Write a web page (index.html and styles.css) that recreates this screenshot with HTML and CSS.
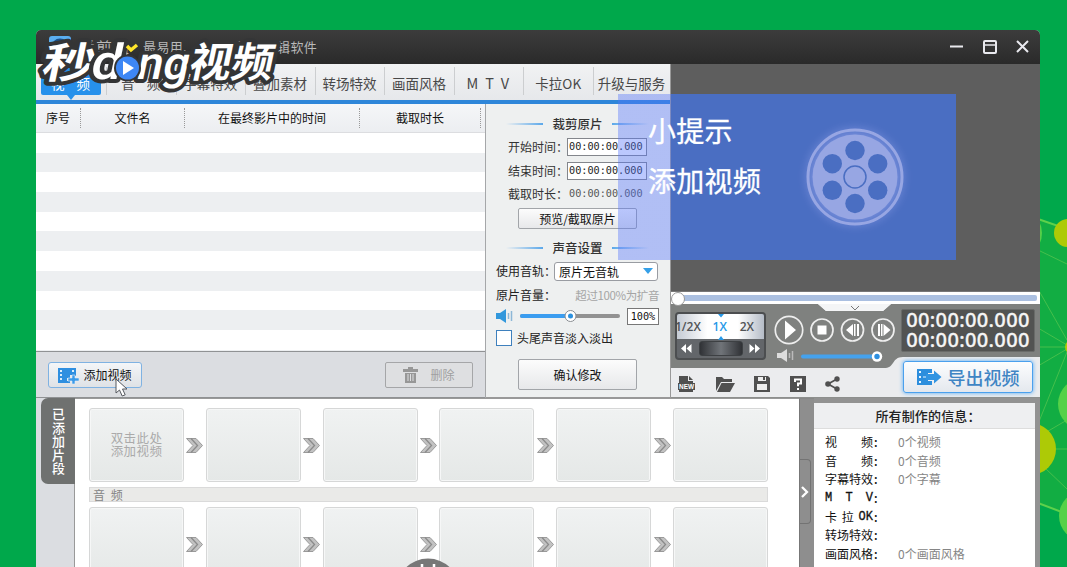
FILE: index.html
```html
<!DOCTYPE html>
<html lang="zh-CN">
<head>
<meta charset="utf-8">
<title>爱剪辑</title>
<link rel="stylesheet" href="styles.css">
</head>
<body>
<svg class="backdrop" width="1067" height="567" viewBox="0 0 1067 567">
  <path d="M1030 216L1067 229V514L1030 499Z" fill="#12ad43"/>
  <g stroke="#46bf4c" stroke-width="1" fill="none">
    <path d="M1038 219L1067 229" stroke="#5ed14b" stroke-width="2"/>
    <path d="M1038 250L1067 264M1038 289L1067 340M1038 328L1067 345M1038 347H1067M1038 366L1067 349M1038 424L1067 352M1038 437L1067 420M1038 449H1067M1045 468L1067 489"/>
    <path d="M1038 503L1067 514" stroke="#5ed14b" stroke-width="2"/>
  </g>
  <ellipse cx="1034" cy="233" rx="8" ry="15" fill="#55cf49"/>
  <circle cx="1068" cy="233" r="14" fill="#adca06"/>
  <circle cx="1072" cy="347" r="7" fill="#adca06"/>
  <circle cx="1084" cy="404" r="26" fill="#55d148"/>
  <circle cx="1030" cy="449" r="26" fill="#adca06"/>
  <circle cx="1084" cy="516" r="25" fill="#55d148"/>
</svg>

<main class="window">
  <header class="titlebar">
    <svg class="app-icon" width="22" height="22" viewBox="0 0 22 22"><rect width="22" height="22" rx="3" fill="#5aaef0"/><circle cx="11" cy="11" r="7" fill="none" stroke="#1c4e86" stroke-width="3"/></svg>
    <span class="app-name">爱剪辑</span>
    <span class="slogan">最易用、强大的视频剪辑软件</span>
    <svg class="window-buttons" width="82" height="16" viewBox="0 0 82 16" fill="none" stroke="#e9e9ee" stroke-width="2">
      <path d="M1 7.500h13M68 2l11 11M79 2l-11 11"/><rect x="35" y="2" width="12" height="12" rx="1"/><path d="M35 6h12" stroke-width="1.500"/>
    </svg>
  </header>

  <div class="upper">
    <section class="editor">
      <nav class="tabs">
        <span class="tab active">视<i></i>频</span>
        <span class="tab">音<i></i>频</span>
        <span class="tab">字幕特效</span>
        <span class="tab">叠加素材</span>
        <span class="tab">转场特效</span>
        <span class="tab">画面风格</span>
        <span class="tab mtv">M T V</span>
        <span class="tab">卡拉OK</span>
        <span class="tab last">升级与服务</span>
      </nav>
      <div class="work">
        <div class="list">
          <div class="list-head">
            <span class="col c1">序号</span><span class="col c2">文件名</span><span class="col c3">在最终影片中的时间</span><span class="col c4">截取时长</span>
          </div>
          <div class="list-rows"></div>
          <div class="list-actions">
            <button class="add-btn">
              <svg width="21" height="17" viewBox="0 0 21 17"><path d="M0 1h18v8h-3v-1h-3v3H9v3h3v2H0z" fill="#2f8fe0"/><path d="M2 3h2v2H2zM2 7h2v2H2zM2 11h2v2H2zM14 3h2v2h-2z" fill="#dceefb"/><path d="M14 8h3v3h4v3h-4v3h-3v-3h-4v-3h4z" fill="#3c9be8" stroke="#e4effa" stroke-width=".6"/></svg>
              添加视频
            </button>
            <button class="del-btn">
              <svg width="15" height="16" viewBox="0 0 15 16" fill="#979797"><path d="M5 0h5v2h5v3H0V2h5zM2 6h11v10H2z"/><path d="M5 7v7M7.500 7v7M10 7v7" stroke="#dedfe1" stroke-width="1"/></svg>
              <span>删除</span>
            </button>
          </div>
        </div>

        <aside class="settings">
          <h2 class="sec-title">裁剪原片</h2>
          <div class="time-row"><span>开始时间：</span><span class="time-box">00:00:00.000</span></div>
          <div class="time-row"><span>结束时间：</span><span class="time-box">00:00:00.000</span></div>
          <div class="time-row"><span>截取时长：</span><span class="time-box plain">00:00:00.000</span></div>
          <button class="panel-btn">预览/截取原片</button>
          <h2 class="sec-title second">声音设置</h2>
          <div class="track-row"><span>使用音轨：</span><span class="select">原片无音轨<svg width="10" height="6" viewBox="0 0 10 6"><path d="M0 0h10L5 6z" fill="#35a0e8"/></svg></span></div>
          <div class="volume-label"><span>原片音量：</span><span class="hint">超过100%为扩音</span></div>
          <div class="volume-row">
            <svg width="18" height="14" viewBox="0 0 18 14"><path d="M0 4h4l6-4v14l-6-4H0z" fill="#3298dc"/><path d="M12.500 4v6M15.500 2v10" stroke="#8db7d7" stroke-width="1.500"/></svg>
            <svg class="slider" width="100" height="14" viewBox="0 0 100 14"><rect y="5" width="100" height="4" rx="2" fill="#929292"/><rect y="5" width="50" height="4" rx="2" fill="#3b9df0"/><circle cx="50.500" cy="7" r="5.500" fill="#fff" stroke="#898d92"/><circle cx="50.500" cy="7" r="2.500" fill="#2c91df"/></svg>
            <span class="percent">100%</span>
          </div>
          <div class="fade-row"><i class="check"></i><span>头尾声音淡入淡出</span></div>
          <button class="panel-btn confirm">确认修改</button>
        </aside>
      </div>
    </section>

    <section class="player">
      <div class="screen"></div>
      <div class="seek"><i></i></div>
      <div class="controls">
        <svg class="control-shape" width="369" height="94" viewBox="0 0 369 94">
          <path d="M0 0H147l8 7h57l8-7H369V53H232c-6 0-8 3-10 6s-4 5-9 5H0z" fill="#7f817f"/>
          <path d="M147 0l8 7h57l8-7z" fill="#f4f5f6"/><path d="M180 2l4 4 4-4" fill="none" stroke="#777"/>
        </svg>
        <div class="controls-left">
          <div class="transport">
            <div class="speed">
              <div class="speed-values"><span class="half">1/2X</span><span class="one">1X</span><span>2X</span>
                <svg class="speed-marks" width="8" height="26" viewBox="0 0 8 26" fill="#2699e8"><path d="M1 0h6L4 3.500zM1 26h6L4 22z"/></svg></div>
              <div class="speed-wheel">
                <svg width="11" height="9" viewBox="0 0 11 9" fill="#fff"><path d="M5 0v9L0 4.500zM10.500 0v9l-5-4.500z"/></svg>
                <i></i>
                <svg width="11" height="9" viewBox="0 0 11 9" fill="#fff"><path d="M.5 0v9l5-4.500zM6 0v9l5-4.500z"/></svg>
              </div>
            </div>
            <svg class="buttons" width="124" height="60" viewBox="0 0 124 60">
              <g fill="none" stroke="#eee" stroke-width="1.700"><circle cx="18" cy="19" r="13.700"/><circle cx="51" cy="19" r="11"/><circle cx="81.500" cy="19" r="11"/><circle cx="112" cy="19" r="11"/></g>
              <g fill="#fff"><path d="M14 9.500v19L25 19zM46.500 14.500h9v9h-9zM75 19l7-6v12zM83 13h1.500v12H83zM86 13h2v12h-2zM107 13h2v12h-2zM110 13h1.500v12H110zM112.500 13l7 6-7 6z"/>
              <path d="M6 42h4l6-4v13l-6-4H6z" fill="#ddd"/></g>
              <path d="M18.500 42v5M21.500 40v9" stroke="#bbb" stroke-width="1.500"/>
              <path d="M32 45.500h74" stroke="#45a2ed" stroke-width="4" stroke-linecap="round"/><circle cx="106" cy="45.500" r="5.200" fill="#fff"/><circle cx="106" cy="45.500" r="2.700" fill="#2d8fe0"/>
            </svg>
          </div>
          <div class="tools">
            <svg width="17" height="16" viewBox="0 0 17 16"><path d="M1 0h9v5h5v11H1z" fill="#505050"/><path d="M11 0l4 4h-4z" fill="#505050"/><rect y="7" width="17" height="7" fill="#505050"/><text class="new-label" x="1" y="13.300" textLength="15" lengthAdjust="spacingAndGlyphs">NEW</text></svg>
            <svg width="20" height="16" viewBox="0 0 20 16"><path d="M1 15V1h6l2 2h8v3H6z" fill="#505050"/><path d="M6.500 7H20l-5 9H2z" fill="#505050"/></svg>
            <svg width="16" height="16" viewBox="0 0 16 16"><path d="M0 0h14l2 2v14H0z" fill="#505050"/><path d="M4 1h8v4H4zM3 8h10v6H3z" fill="#eee"/><path d="M9 1h2v3H9z" fill="#505050"/></svg>
            <svg width="16" height="16" viewBox="0 0 16 16"><path d="M0 0h16v16H0z" fill="#505050"/><path d="M5 6V3.500h6v4H8v2.800M8 12v2" fill="none" stroke="#fff" stroke-width="2"/></svg>
            <svg width="15" height="16" viewBox="0 0 15 16"><path d="M12 3L3 8l9 5" fill="none" stroke="#505050" stroke-width="1.700"/><g fill="#505050"><circle cx="12" cy="3" r="2.700"/><circle cx="3" cy="8" r="2.800"/><circle cx="12" cy="13" r="2.700"/></g></svg>
          </div>
        </div>
        <div class="controls-right">
          <div class="clock"><span>00:00:00.000</span><span>00:00:00.000</span></div>
          <button class="export">
            <svg width="25" height="16" viewBox="0 0 25 16"><path d="M0 0h15v4h-4v8h4v4H0z" fill="#2c8edd"/><path d="M2 2h2v2H2zM2 7h2v2H2zM2 12h2v2H2zM6 7.500h7v1H6z" fill="#e6f4ff"/><path d="M9 5h8V1.500l7.500 6.500-7.500 6.500V11H9z" fill="#3194e2"/></svg>
            导出视频
          </button>
        </div>
      </div>
    </section>
  </div>

  <svg class="symbols" width="0" height="0"><symbol id="next" viewBox="0 0 17 15">
    <path d="M.5.500H10L16.500 7.500 10 14.500H.5L7 7.500z" fill="#c2c2c2" stroke="#9a9a9a"/><path d="M5 .500l6.500 7-6.500 7" fill="none" stroke="#8b8b8b" stroke-width="1.300"/>
  </symbol></svg>

  <div class="lower">
    <div class="rail"><span>已添加片段</span></div>
    <section class="clips">
      <div class="slots">
        <div class="slot"><p><span>双击此处</span><span>添加视频</span></p></div><svg class="next"><use href="#next"/></svg><div class="slot"></div><svg class="next"><use href="#next"/></svg><div class="slot"></div><svg class="next"><use href="#next"/></svg><div class="slot"></div><svg class="next"><use href="#next"/></svg><div class="slot"></div><svg class="next"><use href="#next"/></svg><div class="slot"></div>
      </div>
      <div class="audio-bar">音 频</div>
      <div class="slots">
        <div class="slot"></div><svg class="next"><use href="#next"/></svg><div class="slot"></div><svg class="next"><use href="#next"/></svg><div class="slot"></div><svg class="next"><use href="#next"/></svg><div class="slot"></div><svg class="next"><use href="#next"/></svg><div class="slot"></div><svg class="next"><use href="#next"/></svg><div class="slot"></div>
      </div>
    </section>
    <div class="divider"><span><svg width="8" height="12" viewBox="0 0 8 12"><path d="M1 1l5 5-5 5" fill="none" stroke="#fff" stroke-width="2.300"/></svg></span></div>
    <section class="info">
      <h2>所有制作的信息：</h2>
      <dl>
        <dt><b>视</b><b>频</b></dt><dd>0个视频</dd>
        <dt><b>音</b><b>频</b></dt><dd>0个音频</dd>
        <dt><b>字幕特效</b></dt><dd>0个字幕</dd>
        <dt class="mono"><b>M</b><b>T</b><b>V</b></dt><dd></dd>
        <dt><b>卡</b><b>拉</b><b class="ok">OK</b></dt><dd></dd>
        <dt><b>转场特效</b></dt><dd></dd>
        <dt><b>画面风格</b></dt><dd>0个画面风格</dd>
        <dt><b>叠加素材</b></dt><dd>0个素材</dd>
      </dl>
    </section>
  </div>
</main>

<section class="tip">
  <div class="tip-text"><span>小提示</span><span>添加视频</span></div>
  <svg class="reel" width="110" height="110" viewBox="-55 -55 110 110">
    <circle r="47" fill="none" stroke="#97a6e3" stroke-width="3"/><circle r="42.500" fill="#97a6e3"/>
    <g fill="#4a6ec2"><circle cy="-26.500" r="9.700"/><circle cy="26.500" r="9.700"/><circle cx="-22.700" cy="-13.300" r="9.700"/><circle cx="22.700" cy="-13.300" r="9.700"/><circle cx="-22.700" cy="13.300" r="9.700"/><circle cx="22.700" cy="13.300" r="9.700"/></g>
    <circle r="11" fill="none" stroke="#4a6ec2" stroke-width="1.500"/>
  </svg>
</section>

<svg class="brand" width="250" height="70" viewBox="34 34 250 70">
  <g class="brand-text" transform="translate(15.700) skewX(-12)">
    <text x="41" y="78" textLength="53" lengthAdjust="spacingAndGlyphs" font-size="42">秒</text>
    <text x="90" y="79.500" font-size="49" class="latin" textLength="31" lengthAdjust="spacingAndGlyphs">d</text>
    <text x="136" y="79" font-size="46" class="latin" textLength="52" lengthAdjust="spacingAndGlyphs">ng</text>
    <text x="188" y="77" textLength="84" lengthAdjust="spacingAndGlyphs" font-size="41">视频</text>
  </g>
  <circle cx="127.500" cy="68" r="13.500" fill="#343536"/><circle cx="127.500" cy="68" r="11.500" fill="#3d87f5"/><path d="M123 61v14l11-7z" fill="#fff"/>
  <path d="M127 46l4 4 6-5" fill="none" stroke="#ffe52b" stroke-width="3.500"/>
</svg>

<svg class="cursor" width="14" height="20" viewBox="0 0 14 20"><path d="M1 1v14l3.500-3 2.700 6 3-1.200-2.700-5.800H12z" fill="#fff" stroke="#55585f"/></svg>
<svg class="bubble" width="64" height="10" viewBox="0 0 64 10"><circle cx="32" cy="32" r="31.500" fill="#777"/><path d="M26 6v4M38 6v4" stroke="#fff" stroke-width="2.500"/></svg>
</body>
</html>
```
FILE: styles.css
```css
* { box-sizing: border-box; }
body {
  margin: 0; width: 1067px; height: 567px; overflow: hidden; position: relative;
  background: #00a84b; color: #222;
  font: 12px/16px "Noto Sans CJK SC", sans-serif;
}
button { font: inherit; color: inherit; padding: 0; margin: 0; display: flex; align-items: center; justify-content: center; }
h2, p, dl, dd { margin: 0; }
svg { display: block; flex: none; }
.symbols { position: absolute; }
.backdrop { position: absolute; left: 0; top: 0; }
.window {
  position: relative; width: 1004px; height: 537px; margin: 30px 0 0 36px; overflow: hidden;
  border-radius: 5px 5px 0 0; background: #dbdde1; display: flex; flex-direction: column;
}
.titlebar { height: 34px; flex: none; display: flex; align-items: center; padding: 0 9px 0 13px; background: linear-gradient(#3c3c3c, #2a2a2a); color: #b9b9b9; }
.app-name { font-size: 16px; letter-spacing: 1px; margin-left: 8px; width: 64px; }
.slogan { font-size: 13px; letter-spacing: .4px; }
.window-buttons { margin-left: auto; }

.upper { height: 334px; flex: none; display: flex; }
.editor { width: 635px; display: flex; flex-direction: column; border-right: 1px solid #999; }
.tabs { height: 40px; flex: none; display: flex; padding: 3px 0 0 5px; background: linear-gradient(#f1f2f3, #e6e8eb); border-bottom: 4px solid #2e86d9; }
.tab { width: 69.600px; height: 28px; display: flex; align-items: center; justify-content: center; font-size: 13.500px; color: #484848; position: relative; white-space: nowrap; padding: 4px 1px 0 0; }
.tab i { width: 12px; }
.tab + .tab { border-left: 1px solid #ccced0; }
.tab + .tab.last { width: 77px; }
.tab.mtv { font-size: 14.500px; letter-spacing: 1.800px; }
.tab.active { width: 60px; margin-right: 5px; background: #2791eb; color: #fff; border-radius: 2px; }
.tab.active::after { content: ""; position: absolute; left: 26px; bottom: -5px; border: 4px solid transparent; border-top: 5px solid #2791eb; border-bottom: 0; }
.work { flex: 1; display: flex; }
.list { width: 450px; display: flex; flex-direction: column; border-right: 1px solid #a5a7a9; }
.list-head { height: 29px; flex: none; display: flex; align-items: center; background: linear-gradient(#f5f6f8, #eceef1); border-bottom: 1px solid #dcdde0; }
.col { height: 20px; line-height: 20px; text-align: center; border-right: 1px dotted #999; color: #111; }
.c1 { width: 45px; }
.c2 { width: 104px; }
.c3 { width: 175px; }
.c4 { width: 121px; }
.list-rows { flex: 1; background: repeating-linear-gradient(#fff 0 19.700px, #edeff1 19.700px 39.400px); }
.list-actions { height: 47px; flex: none; display: flex; justify-content: space-between; align-items: flex-start; padding: 10px 12px; background: #dbdde1; border-top: 1px solid #909294; border-bottom: 1px solid #8f9193; }
.add-btn { width: 94px; height: 26px; gap: 4px; border: 1.500px solid #7fb2e2; border-radius: 3px; background: linear-gradient(#f4f6f8, #dfe2e6); color: #111; }
.del-btn { width: 88px; height: 26px; border: 1px solid #a5a6a8; border-radius: 2px; background: #dedfe1; color: #a0a0a0; gap: 12px; }

.settings { width: 184px; background: #eef0f0; border-bottom: 1px solid #999; padding: 12px 11px 0 10px; display: flex; flex-direction: column; }
.sec-title { height: 16px; flex: none; font-size: 12.500px; line-height: 16px; font-weight: 500; color: #333; display: flex; justify-content: center; align-items: center; gap: 9px; }
.sec-title::before, .sec-title::after { content: ""; width: 37px; height: 2px; background: linear-gradient(90deg, #eef0f0, #5ba8ea); }
.sec-title::after { background: linear-gradient(270deg, #eef0f0, #5ba8ea); }
.time-row { height: 18px; margin-top: 5.500px; display: flex; justify-content: flex-end; align-items: center; padding-right: 12px; color: #333; }
.sec-title + .time-row { margin-top: 6px; }
.time-row > span:first-child { width: 59px; white-space: nowrap; }
.time-box { width: 80px; height: 18px; padding-left: 1px; line-height: 16px; border: 1px solid #83868c; background: #fff; font-size: 10.200px; font-family: "DejaVu Sans Mono", monospace; color: #222; white-space: nowrap; }
.time-box.plain { border-color: transparent; background: none; color: #555; }
.panel-btn { width: 119px; height: 21px; flex: none; margin: 5px 0 0 22px; border: 1px solid #a2a5a9; border-radius: 2px; background: linear-gradient(#fcfcfc, #e7e8ea); color: #111; }
.second { margin-top: 11px; }
.track-row { height: 20px; display: flex; align-items: center; margin-top: 5px; white-space: nowrap; }
.track-row > span:first-child { width: 58px; }
.select { width: 104px; height: 19px; flex: none; border: 1px solid #999ca2; border-radius: 3px; background: #fff; color: #111; line-height: 17px; padding: 0 4px; display: flex; align-items: center; justify-content: space-between; }
.volume-label { height: 16px; margin-top: 6px; display: flex; justify-content: space-between; white-space: nowrap; }
.hint { color: #a5a5a5; font-size: 11.500px; letter-spacing: -.4px; }
.volume-row { display: flex; align-items: center; height: 18px; margin-top: 4px; }
.slider { margin-left: 6px; }
.percent { margin-left: auto; width: 32px; height: 17px; border: 1px solid #777; background: #fff; font: 10.200px/15px "DejaVu Sans Mono", monospace; text-align: center; color: #111; }
.fade-row { display: flex; align-items: center; gap: 5px; height: 16px; margin-top: 5px; }
.check { width: 16px; height: 16px; border: 1px solid #3e80bd; background: #fff; }
.confirm { height: 31px; margin-top: 13px; }

.player { flex: 1; display: flex; flex-direction: column; }
.screen { height: 227px; flex: none; background: #5e5e5e; }
.seek { height: 13px; flex: none; background: #fff; border-top: 1px solid #777; padding: 3px 3px 0 0; position: relative; }
.seek::before { content: ""; position: absolute; left: 0; top: 0; width: 12px; height: 12px; border: 1px solid #999; border-radius: 50%; background: #fff; z-index: 1; }
.seek i { display: block; height: 6px; margin-left: 6px; background: #abc0e1; border-radius: 0 2px 2px 0; }
.controls { height: 94px; position: relative; display: flex; background: #ebecee; border-bottom: 1px solid #8d8f8d; }
.control-shape { position: absolute; left: 0; top: 0; }
.controls-left { width: 230px; position: relative; display: flex; flex-direction: column; }
.transport { height: 64px; display: flex; padding: 8px 0 0 4px; }
.speed { width: 91px; height: 48px; flex: none; border: 2px solid #4c4e50; border-radius: 4px; background: #63666a; overflow: hidden; display: flex; flex-direction: column; }
.speed-values { height: 25px; position: relative; display: flex; align-items: center; justify-content: space-between; padding: 0 10px 0 0; background: linear-gradient(90deg, #c5cbd4, #fff 35% 70%, #b5bcc7); font: 600 12px/22px "Open Sans", sans-serif; color: #505356; }
.half { margin-left: -2px; }
.one { color: #2699e8; margin-right: 1px; }
.speed-marks { position: absolute; left: 40px; top: 0; }
.speed-wheel { flex: 1; display: flex; align-items: center; justify-content: space-between; padding: 0 4px; }
.speed-wheel i { width: 44px; height: 15px; border-radius: 3px; background: linear-gradient(90deg, #303236, #707479 50%, #303236); border: 1px solid #3d4043; }
.buttons { margin-left: 5px; margin-top: -1px; }
.tools { height: 29px; display: flex; align-items: center; gap: 19.500px; padding: 2px 0 0 7px; }
.new-label { font: bold 6.500px "Liberation Sans", sans-serif; fill: #fff; }
.controls-right { position: relative; padding-top: 5px; width: 134px; display: flex; flex-direction: column; align-items: center; }
.clock { width: 134px; height: 43px; flex: none; background: #525352; border: 1px solid #696b69; border-radius: 2px; color: #f5f5f5; font: 500 20px/19.500px "Noto Sans", sans-serif; letter-spacing: .35px; display: flex; flex-direction: column; align-items: center; -webkit-text-stroke: .3px #f5f5f5; }
.clock span { height: 19.500px; white-space: nowrap; }
.export { width: 130px; height: 32px; margin-top: 9px; gap: 6px; border: 1.500px solid #4aa0ed; border-radius: 3px; background: linear-gradient(#fcfdfe, #e4e8ee); box-shadow: 0 0 4px #55aaf5; font-size: 18px; line-height: 28px; font-weight: 500; color: #3f85c4; white-space: nowrap; }

.lower { flex: 1; display: flex; min-height: 0; overflow: hidden; }
.rail { width: 39px; padding-left: 5px; border-right: 1px solid #999; }
.rail span { display: block; width: 34px; height: 86px; padding: 9px 10px 0 11px; background: #6f7170; color: #fff; border-radius: 7px 0 0 7px; font-size: 13px; line-height: 13.500px; font-weight: 500; }
.clips { width: 725px; background: #fff; border-top: 1px solid #999; border-right: 1px solid #777; padding: 9px 31px 0 14px; }
.slots { display: flex; align-items: center; justify-content: space-between; }
.slot { width: 95px; height: 74px; border: 1px solid #d6d7d7; border-radius: 3px; box-shadow: inset 0 0 0 1px #f6f7f7; background: linear-gradient(#f0f2f2, #e5e8e7); display: flex; align-items: center; justify-content: center; color: #aaa; }
.slot p { display: flex; flex-direction: column; font-size: 12.500px; line-height: 12.700px; letter-spacing: .4px; }
.next { width: 17px; height: 15px; }
.audio-bar { height: 15px; margin: 5px 0; background: #eaeae8; border: 1px solid #dadada; color: #858585; line-height: 13px; padding-left: 3px; word-spacing: 3px; }
.divider { width: 14px; background: #8e8e8e; border-top: 1px solid #888; padding-top: 60px; }
.divider span { display: flex; width: 11px; height: 65px; align-items: center; justify-content: center; border: 1px solid #737373; border-left: 0; border-radius: 0 4px 4px 0; }
.info { flex: 1; border: solid #929292; border-width: 5px 5px 0 0; background: #fff; }
.info h2 { height: 26px; background: #eeeff1; border-bottom: 1px solid #ddd; font-size: 13px; line-height: 26px; font-weight: 500; text-align: center; padding-left: 7px; letter-spacing: .15px; }
.info dl { display: grid; grid-template-columns: 73px 1fr; grid-auto-rows: 18.700px; padding: 4px 0 0 11px; line-height: 18.700px; }
.info dt { width: 48px; display: flex; justify-content: space-between; color: #111; position: relative; white-space: nowrap; }
.info dt b { font-weight: 400; }
.info dt::after { content: ":"; position: absolute; left: 49px; font-weight: 500; }
.info dd { color: #858585; }
.info .mono b, .info .ok { font-family: "Liberation Mono", monospace; font-size: 12px; -webkit-text-stroke: .3px #111; }

.tip { position: absolute; left: 618px; top: 94px; width: 338px; height: 166px; display: flex; background: linear-gradient(90deg, rgba(85, 117, 252, .4) 53px, #4a6ec2 53px); color: #fff; }
.tip-text { width: 182px; padding: 11px 0 0 30px; display: flex; flex-direction: column; font-size: 28px; line-height: 50px; letter-spacing: .3px; white-space: nowrap; -webkit-text-stroke: .3px #fff; }
.reel { margin-top: 28px; filter: drop-shadow(0 0 4px #8094e0); }
.brand { position: absolute; left: 34px; top: 34px; overflow: visible; }
.brand-text { font-family: "Noto Sans CJK SC", sans-serif; font-weight: 700; fill: #fff; stroke: #343536; stroke-width: 8px; stroke-linejoin: round; paint-order: stroke; }
.brand-text .latin { font-family: Roboto, sans-serif; font-weight: 500; }
.cursor { position: absolute; left: 115px; top: 378px; }
.bubble { position: absolute; left: 396px; top: 558px; }
```
